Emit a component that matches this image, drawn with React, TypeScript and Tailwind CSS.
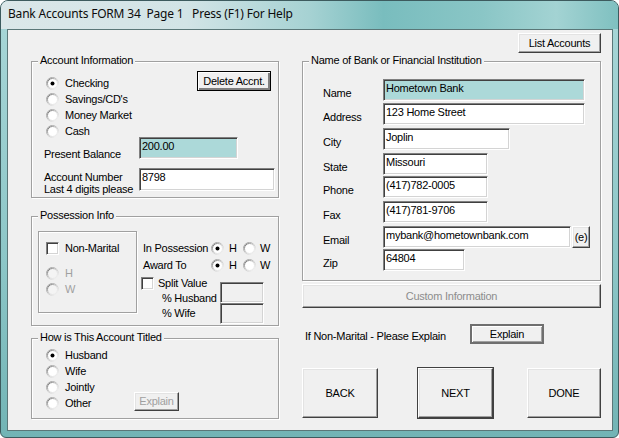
import React from 'react';

const raised =
  'bg-[#f0f0f0] border border-t-white border-l-white border-b-[#404040] border-r-[#404040] shadow-[inset_-1px_-1px_0_#a0a0a0,inset_1px_1px_0_#e3e3e3]';
const sunken =
  'border border-t-[#808080] border-l-[#808080] border-b-white border-r-white shadow-[inset_1px_1px_0_#404040,inset_-1px_-1px_0_#d4d4d4]';

const Radio: React.FC<{ checked?: boolean; disabled?: boolean }> = ({ checked, disabled }) => (
  <svg width="13" height="13" viewBox="0 0 13 13" className="shrink-0">
    <defs>
      <linearGradient id="rOuter" x1="0" y1="0" x2="1" y2="1">
        <stop offset="0" stopColor="#8c8c8c" />
        <stop offset="0.5" stopColor="#c9c9c9" />
        <stop offset="1" stopColor="#ffffff" />
      </linearGradient>
      <linearGradient id="rInner" x1="0" y1="0" x2="1" y2="1">
        <stop offset="0" stopColor="#5a5a5a" />
        <stop offset="0.5" stopColor="#d8d8d8" />
        <stop offset="1" stopColor="#f2f2f2" />
      </linearGradient>
    </defs>
    <circle cx="6.5" cy="6.5" r="6" fill="none" stroke="url(#rOuter)" />
    <circle cx="6.5" cy="6.5" r="5" fill={disabled ? '#f4f4f4' : '#ffffff'} stroke="url(#rInner)" />
    {checked && <circle cx="6.5" cy="6.5" r="2" fill="#000" />}
  </svg>
);

const Check: React.FC = () => <span className={`block w-[13px] h-[13px] shrink-0 bg-white ${sunken}`} />;

const Field: React.FC<{ className: string; children?: React.ReactNode }> = ({ className, children }) => (
  <div className={`shrink-0 pl-[2px] pt-[2px] leading-[13px] whitespace-nowrap overflow-hidden ${sunken} ${className}`}>
    {children}
  </div>
);

const Group: React.FC<{ title: string; className: string; children?: React.ReactNode }> = ({ title, className, children }) => (
  <div className={`relative border border-[#a0a0a0] shadow-[1px_1px_0_#ffffff,inset_1px_1px_0_#ffffff] ${className}`}>
    <span className="absolute top-[-8px] left-[6px] px-[2px] bg-[#f0f0f0] leading-[13px] whitespace-nowrap">{title}</span>
    {children}
  </div>
);

const RadioRow: React.FC<{ label: string; checked?: boolean }> = ({ label, checked }) => (
  <div className="flex items-center h-[16px]">
    <Radio checked={checked} />
    <span className="ml-[6px] leading-[13px]">{label}</span>
  </div>
);

const HWRow: React.FC<{ label: string }> = ({ label }) => (
  <div className="flex items-center h-[17px]">
    <span className="pl-[2px] w-[70px] leading-[13px] whitespace-nowrap">{label}</span>
    <Radio checked />
    <span className="ml-[5px] w-[14px] leading-[13px]">H</span>
    <Radio />
    <span className="ml-[4px] leading-[13px]">W</span>
  </div>
);

const BankRow: React.FC<{ label: string; mt: string; w: string; teal?: boolean; value: string; extra?: React.ReactNode }> = ({
  label,
  mt,
  w,
  teal,
  value,
  extra,
}) => (
  <div className={`flex items-start ${mt}`}>
    <span className="w-[80px] pl-[20px] pt-[8px] leading-[13px]">{label}</span>
    <Field className={`h-[22px] ${w} ${teal ? 'bg-[#acd9d9]' : 'bg-white'}`}>{value}</Field>
    {extra}
  </div>
);

export default function App() {
  return (
    <div className="w-[619px] h-[438px] flex flex-col rounded-t-[8px] rounded-b-[6px] border border-[#3d5b5e] overflow-hidden bg-[linear-gradient(to_bottom,#a9d7d8,#8cc6c7_60%,#72b4b5)] font-['Liberation_Sans',Arial,sans-serif] text-[11px] tracking-[-0.25px] text-black">
      {/* TITLE BAR */}
      <div className="h-[28px] shrink-0 flex items-center pl-[7px] pb-[2px] bg-[linear-gradient(to_right,#dbe7e9_0%,#d2e4e6_30%,#a6d2d3_50%,#79bdbe_62%,#8ac6c6_78%,#a3d3d3_90%,#7fc0c0_100%)]">
        <span className="font-['Noto_Sans','Open_Sans',sans-serif] text-[12px] tracking-[-0.2px] whitespace-pre text-[#0c0c0c]">
          {'Bank Accounts FORM 34  Page 1   Press (F1) For Help'}
        </span>
      </div>

      {/* CLIENT AREA */}
      <div className="flex-1 ml-[6px] mr-[5px] mb-[6px] border border-[#5a7778] bg-[#f0f0f0] flex">
        {/* LEFT COLUMN */}
        <div className="ml-[23px] w-[248px] pt-[31px] flex flex-col">
          <Group title="Account Information" className="h-[137px]">
            <div className="flex pt-[9px]">
              <div className="mt-[4px] h-[62px] pl-[14px]">
                <RadioRow label="Checking" checked />
                <RadioRow label="Savings/CD's" />
                <RadioRow label="Money Market" />
                <RadioRow label="Cash" />
              </div>
              <button className="ml-auto mr-[7px] w-[74px] h-[20px] bg-[#f0f0f0] border border-black shadow-[inset_1px_1px_0_#ffffff,inset_-2px_-2px_0_#808080] leading-[13px] whitespace-nowrap">
                Delete Accnt.
              </button>
            </div>
            <div className="flex items-start pl-[12px]">
              <span className="w-[95px] pt-[11px] leading-[13px]">Present Balance</span>
              <Field className="w-[99px] h-[22px] bg-[#acd9d9]">200.00</Field>
            </div>
            <div className="flex items-start pl-[12px] mt-[7px]">
              <span className="w-[95px] pt-[3px] leading-[12px] whitespace-nowrap">
                Account Number
                <br />
                Last 4 digits please
              </span>
              <Field className="w-[136px] h-[23px] bg-white">8798</Field>
            </div>
          </Group>

          <Group title="Possession Info" className="mt-[18px] h-[110px]">
            <div className="flex">
              <div className="ml-[6px] mt-[14px] w-[99px] h-[82px] border border-[#a0a0a0] shadow-[1px_1px_0_#ffffff,inset_1px_1px_0_#ffffff]">
                <div className="flex items-center h-[13px] mt-[10px] pl-[7px]">
                  <Check />
                  <span className="ml-[6px] leading-[13px]">Non-Marital</span>
                </div>
                <div className="mt-[10px] pl-[7px] text-[#a0a0a0]">
                  <div className="flex items-center h-[16px]">
                    <Radio disabled />
                    <span className="ml-[6px] leading-[13px]">H</span>
                  </div>
                  <div className="flex items-center h-[16px]">
                    <Radio disabled />
                    <span className="ml-[6px] leading-[13px]">W</span>
                  </div>
                </div>
              </div>
              <div className="ml-[4px] pt-[23px]">
                <HWRow label="In Possession" />
                <HWRow label="Award To" />
                <div className="flex">
                  <div className="w-[79px] pt-[3px]">
                    <div className="flex items-center h-[13px]">
                      <Check />
                      <span className="ml-[4px] leading-[13px]">Split Value</span>
                    </div>
                    <div className="mt-[1px] pl-[21px] h-[15px] leading-[15px]">% Husband</div>
                    <div className="pl-[21px] h-[15px] leading-[15px]">% Wife</div>
                  </div>
                  <div className="pt-[8px]">
                    <Field className="w-[44px] h-[21px] bg-[#f0f0f0]" />
                    <Field className="w-[44px] h-[21px] bg-[#f0f0f0]" />
                  </div>
                </div>
              </div>
            </div>
          </Group>

          <Group title="How is This Account Titled" className="mt-[12px] h-[81px]">
            <div className="pt-[8px] pl-[14px]">
              <RadioRow label="Husband" checked />
              <RadioRow label="Wife" />
              <RadioRow label="Jointly" />
              <div className="flex items-center h-[16px]">
                <Radio />
                <span className="ml-[6px] w-[69px] leading-[13px]">Other</span>
                <button className={`w-[45px] h-[19px] mt-[-3px] leading-[13px] text-[#a0a0a0] ${raised}`}>Explain</button>
              </div>
            </div>
          </Group>
        </div>

        {/* RIGHT COLUMN */}
        <div className="ml-[23px] w-[299px] pt-[3px] flex flex-col">
          <div className="flex justify-end">
            <button className={`w-[83px] h-[20px] leading-[13px] ${raised}`}>List Accounts</button>
          </div>

          <Group title="Name of Bank or Financial Institution" className="mt-[8px] h-[220px]">
            <BankRow label="Name" mt="mt-[17px]" w="w-[202px]" teal value="Hometown Bank" />
            <BankRow label="Address" mt="mt-[2px]" w="w-[202px]" value="123 Home Street" />
            <BankRow label="City" mt="mt-[3px]" w="w-[127px]" value="Joplin" />
            <BankRow label="State" mt="mt-[3px]" w="w-[105px]" value="Missouri" />
            <BankRow label="Phone" mt="mt-[1px]" w="w-[105px]" value="(417)782-0005" />
            <BankRow label="Fax" mt="mt-[3px]" w="w-[105px]" value="(417)781-9706" />
            <BankRow
              label="Email"
              mt="mt-[3px]"
              w="w-[188px]"
              value="mybank@hometownbank.com"
              extra={<button className={`ml-[1px] w-[18px] h-[22px] leading-[13px] ${raised}`}>(e)</button>}
            />
            <BankRow label="Zip" mt="mt-[1px]" w="w-[82px]" value="64804" />
          </Group>

          <button className={`mt-[3px] h-[24px] w-full leading-[13px] text-[#8d8d8d] ${raised}`}>Custom Information</button>

          <div className="mt-[16px] flex items-start">
            <span className="w-[168px] pl-[3px] pt-[6px] leading-[13px] whitespace-nowrap">If Non-Marital - Please Explain</span>
            <button className="w-[74px] h-[20px] leading-[13px] bg-[#f0f0f0] border-2 border-[#6f6f6f] shadow-[inset_1px_1px_0_#ffffff,inset_-1px_-1px_0_#a0a0a0]">
              Explain
            </button>
          </div>

          <div className="mt-[24px] flex h-[50px]">
            <button className={`w-[76px] h-full ${raised}`}>BACK</button>
            <button className={`ml-[40px] w-[75px] h-full outline outline-1 outline-[#404040] ${raised}`}>NEXT</button>
            <button className={`ml-auto w-[74px] h-full ${raised}`}>DONE</button>
          </div>
        </div>
      </div>
    </div>
  );
}
